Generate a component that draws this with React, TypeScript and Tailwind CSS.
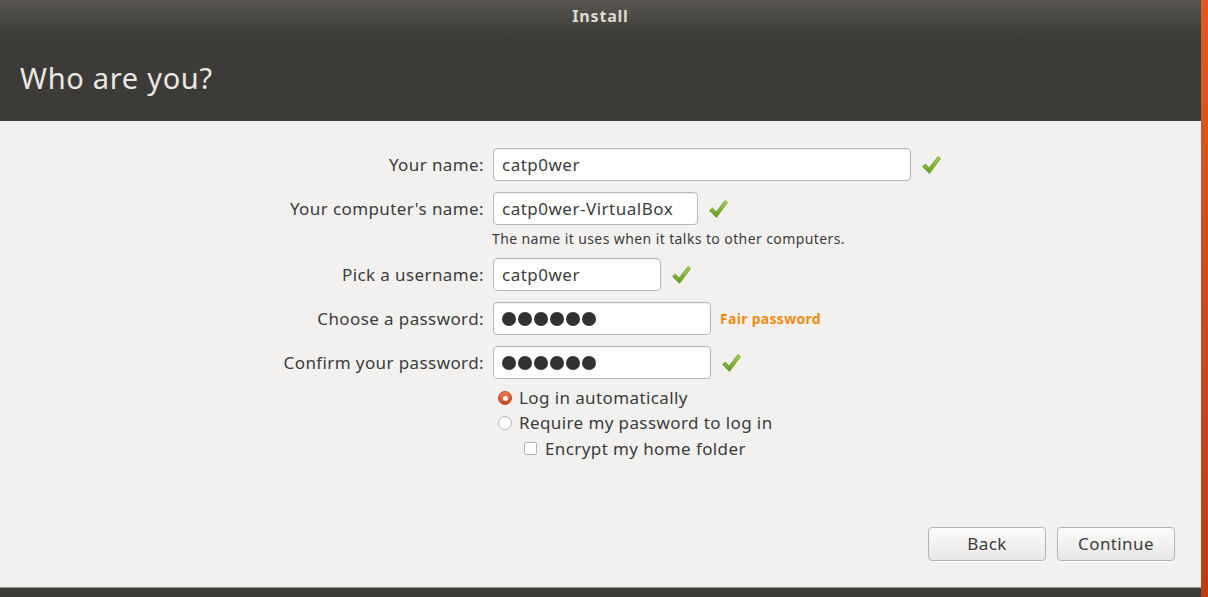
import React from 'react';

const font = { fontFamily: '"Noto Sans", "DejaVu Sans", sans-serif' };

function Check() {
  return (
    <svg width="22" height="22" viewBox="0 0 22 22" className="shrink-0">
      <defs>
        <linearGradient id="chk" x1="0" y1="0" x2="0" y2="1">
          <stop offset="0" stopColor="#a6d45a" />
          <stop offset="1" stopColor="#5f9a1c" />
        </linearGradient>
      </defs>
      <path
        d="M2.5 12.5 L5.5 10 L9 14 L18 2.5 L20.5 4.5 L9.5 19.5 Z"
        fill="url(#chk)"
        stroke="#6d9a2c"
        strokeWidth="0.8"
        strokeLinejoin="round"
      />
    </svg>
  );
}

function Field({ value, width, dots }: { value: string; width: string; dots?: boolean }) {
  return (
    <div
      className={`${width} h-[33px] shrink-0 rounded-[4px] border border-[#b9b7b3] bg-white pl-[8px] flex items-center shadow-[inset_0_1px_1px_rgba(0,0,0,0.06)]`}
    >
      {dots ? (
        <div className="flex gap-[2px]">
          {[0, 1, 2, 3, 4, 5].map((i) => (
            <span key={i} className="block w-[14px] h-[14px] rounded-full bg-[#333230]" />
          ))}
        </div>
      ) : (
        <span className="text-[17px] tracking-[0.5px] text-[#3c3c3c]">{value}</span>
      )}
    </div>
  );
}

function Row({ label, children, className = '' }: { label: string; children: React.ReactNode; className?: string }) {
  return (
    <div className={`flex items-center h-[33px] ${className}`}>
      <div className="w-[484px] shrink-0 text-right text-[17px] tracking-[0.4px] text-[#3c3c3c]">{label}</div>
      <div className="flex items-center gap-[9px] pl-[9px]">{children}</div>
    </div>
  );
}

export default function App() {
  return (
    <div className="w-[1208px] h-[597px] flex overflow-hidden" style={font}>
      <div className="w-[1201px] flex flex-col">
        {/* title bar */}
        <div className="h-[35px] bg-gradient-to-b from-[#5a5751] to-[#3d3c37] flex items-center justify-center">
          <span className="text-[16px] font-bold tracking-[0.8px] text-[#dfdbd2] -mt-[3px]">Install</span>
        </div>
        {/* header */}
        <div className="h-[86px] bg-[#3c3b37] flex items-center pl-[20px]">
          <h1 className="text-[29px] tracking-[0.7px] text-[#ebe8e2]">Who are you?</h1>
        </div>

        {/* content */}
        <div className="flex-1 bg-[#f2f1f0] flex flex-col pt-[27px] pr-[26px] pb-[26px]">
          <Row label="Your name:">
            <Field value="catp0wer" width="w-[418px]" />
            <Check />
          </Row>
          <Row label="Your computer's name:" className="mt-[11px]">
            <Field value="catp0wer-VirtualBox" width="w-[205px]" />
            <Check />
          </Row>
          <div className="pl-[492px] mt-[5px] h-[18px] text-[14px] tracking-[0.4px] leading-[18px] text-[#3c3c3c]">
            The name it uses when it talks to other computers.
          </div>
          <Row label="Pick a username:" className="mt-[10px]">
            <Field value="catp0wer" width="w-[168px]" />
            <Check />
          </Row>
          <Row label="Choose a password:" className="mt-[11px]">
            <Field value="" width="w-[218px]" dots />
            <span className="text-[14px] font-bold tracking-[0.3px] text-[#f28a12]">Fair password</span>
          </Row>
          <Row label="Confirm your password:" className="mt-[11px]">
            <Field value="" width="w-[218px]" dots />
            <Check />
          </Row>

          <div className="pl-[498px] mt-[7px] flex flex-col text-[17px] tracking-[0.4px] text-[#3c3c3c]">
            <div className="h-[24px] flex items-center gap-[7px]">
              <span className="w-[14px] h-[14px] rounded-full bg-gradient-to-b from-[#ee7a4e] to-[#d0441a] border border-[#b9431c] flex items-center justify-center">
                <span className="w-[5px] h-[5px] rounded-full bg-white" />
              </span>
              <span>Log in automatically</span>
            </div>
            <div className="h-[25px] flex items-center gap-[7px]">
              <span className="w-[14px] h-[14px] rounded-full bg-white border border-[#b5b3af]" />
              <span>Require my password to log in</span>
            </div>
            <div className="h-[27px] flex items-center gap-[8px] pl-[26px]">
              <span className="w-[13px] h-[13px] rounded-[2px] bg-white border border-[#b5b3af]" />
              <span>Encrypt my home folder</span>
            </div>
          </div>

          <div className="flex-1" />
          <div className="flex justify-end gap-[11px]">
            <button className="w-[118px] h-[34px] rounded-[4px] border border-[#b4b2ae] bg-gradient-to-b from-[#fbfbfa] to-[#e9e8e6] text-[17px] tracking-[0.4px] text-[#3c3c3c] shadow-[0_1px_0_rgba(255,255,255,0.8)]">
              Back
            </button>
            <button className="w-[118px] h-[34px] rounded-[4px] border border-[#b4b2ae] bg-gradient-to-b from-[#fbfbfa] to-[#e9e8e6] text-[17px] tracking-[0.4px] text-[#3c3c3c] shadow-[0_1px_0_rgba(255,255,255,0.8)]">
              Continue
            </button>
          </div>
        </div>

        {/* bottom bar */}
        <div className="h-[10px] bg-[#3c3b37] border-t border-[#a09e99]" />
      </div>
      <div className="flex-1 bg-gradient-to-b from-[#e4581f] to-[#bc3d14]" />
    </div>
  );
}
